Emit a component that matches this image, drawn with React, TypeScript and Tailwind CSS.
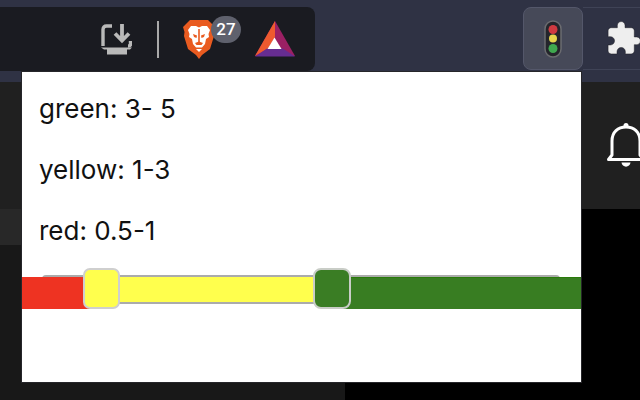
import React from "react";

function DownloadIcon() {
  return (
    <svg width="32" height="32" viewBox="0 0 32 32" fill="none" stroke="#b9b9b9" strokeWidth="3.400">
      <path d="M12 3H6.500Q3 3 3 6.500V23" />
      <path d="M22 1V17M15 10.500L22 17.500L29 10.500" strokeWidth="3.800" />
      <path d="M30.500 18V21.500Q30.500 23 28 23" />
      <path d="M1 24.500H32L30 26.500H27V31.500H7V26.500H4Z" fill="#b9b9b9" stroke="none" />
    </svg>
  );
}

function BraveLion() {
  return (
    <svg width="32" height="40" viewBox="0 0 32 40">
      <path d="M7 1H25L29 5L32 8L30.500 13L31 17L27 30L19 36L16 40L13 36L5 30L1 17L1.500 13L0 8L3 5Z" fill="#e95b20" />
      <path d="M8 7H13L16 8.500L19 7H24L27 11L25.500 15L26 18L23 20L22 25L19 28.500H13L10 25L9 20L6 18L6.500 15L5 11Z" fill="#fff" />
      <path d="M10 15L14 16.500L13.500 19L11 18ZM22 15L18 16.500L18.500 19L21 18ZM15.200 10V23H16.800V10Z" fill="#e95b20" />
      <path d="M12 24L16 22.500L20 24L18.500 26H13.500Z" fill="#e95b20" />
      <path d="M13 30H19L16 33Z" fill="#fff" />
    </svg>
  );
}

function BatLogo() {
  return (
    <svg width="40" height="36" viewBox="0 0 40 36">
      <path d="M20 0L0 35H40Z" fill="#9b2064" />
      <path d="M20 0L0 35L13 27.500L20 16Z" fill="#ee5a2f" />
      <path d="M0 35.500H40L28 27.500H12Z" fill="#662d91" />
      <path d="M19.500 16.500L12.500 28H26.500Z" fill="#fff" />
    </svg>
  );
}

function TrafficLight() {
  return (
    <svg width="18" height="38" viewBox="0 0 18 38">
      <rect x="1" y="1" width="16" height="36" rx="8" fill="#24252b" stroke="#6b6c70" strokeWidth="1.500" />
      <circle cx="9" cy="9.500" r="4.500" fill="#cf3a40" />
      <circle cx="9" cy="18.500" r="4" fill="#e6d64c" />
      <circle cx="9" cy="28.500" r="4.500" fill="#3fa94f" />
    </svg>
  );
}

function Puzzle() {
  return (
    <svg width="37" height="37" viewBox="0 0 24 24" fill="#eeeeee" stroke="#15161c" strokeWidth="0.300">
      <path d="M20.500 11H19V7c0-1.100-.9-2-2-2h-4V3.500C13 2.120 11.880 1 10.500 1S8 2.120 8 3.500V5H4c-1.100 0-1.990.9-1.990 2v3.800H3.500c1.490 0 2.700 1.210 2.700 2.700s-1.210 2.700-2.700 2.700H2V20c0 1.100.9 2 2 2h3.800v-1.500c0-1.490 1.210-2.700 2.700-2.700 1.490 0 2.700 1.210 2.700 2.700V22H17c1.100 0 2-.9 2-2v-4h1.500c1.380 0 2.500-1.120 2.500-2.500S21.880 11 20.500 11z" />
    </svg>
  );
}

function Bell() {
  return (
    <svg width="38" height="48" viewBox="0 0 38 48" fill="none" stroke="#fff" strokeWidth="3" className="shrink-0">
      <path d="M5 33V19C5 10 11 5 19 5C27 5 33 10 33 19V33L36.500 37.500H1.500Z" strokeLinejoin="round" />
      <circle cx="19" cy="3.500" r="2.500" fill="#fff" stroke="none" />
      <path d="M14.500 40.500C15 46 23 46 23.500 40.500Z" fill="#fff" stroke="none" />
    </svg>
  );
}

export default function App() {
  return (
    <div className="relative w-[640px] h-[400px] overflow-hidden bg-black flex flex-col">
      <div className="h-[82px] bg-[#2f3244] flex items-start shrink-0">
        <div className="mt-[7px] w-[315px] h-[64px] shrink-0 bg-[#1a1b21] rounded-r-[8px] flex items-center justify-end pr-[20px]">
          <DownloadIcon />
          <div className="ml-[25px] w-[2px] h-[37px] bg-[#a9a9a9]" />
          <div className="relative ml-[24px] w-[32px] h-[40px]">
            <BraveLion />
            <div className="absolute left-[28px] top-[-3px] w-[30px] h-[27px] rounded-full bg-[#5f616d] text-white text-[17px] font-medium leading-[27px] text-center font-['Roboto',sans-serif]">
              27
            </div>
          </div>
          <div className="ml-[40px]">
            <BatLogo />
          </div>
        </div>
        <div className="ml-[208px] mt-[7px] w-[60px] h-[63px] shrink-0 rounded-[8px] bg-[#464958] border border-[#54576a] flex items-center justify-center">
          <TrafficLight />
        </div>
        <div className="mt-[7px] h-[63px] flex-1 border-y border-[#3f4356] pl-[22px] pt-[12px]">
          <Puzzle />
        </div>
      </div>
      <div className="h-[127px] bg-[#202020] flex justify-end items-center shrink-0 pt-[1px]">
        <div className="mr-[-5px] flex">
          <Bell />
        </div>
      </div>
      <div className="flex-1 flex">
        <div className="w-[345px] bg-[#181818] flex flex-col">
          <div className="h-[36px] bg-[#282828]" />
        </div>
      </div>

      <div className="absolute left-[21px] top-[71px] w-[561px] h-[312px] bg-white border border-[#26262a] font-['Inter',sans-serif] text-[#111111]">
        <div className="pl-[17px] pt-[20px] text-[26px] leading-[34px] flex flex-col gap-[27px]">
          <p>green: 3- 5</p>
          <p>yellow: 1-3</p>
          <p>red: 0.5-1</p>
        </div>
        <div className="relative mt-[20px] h-[41px]">
          <div className="absolute left-[20px] w-[518px] top-[7px] h-[29px] rounded-[4px] bg-[#ababab]" />
          <div className="absolute inset-x-0 top-[9px] flex items-start">
            <div className="w-[70px] h-[32px] bg-[#ee3322]" />
            <div className="w-[240px] h-[25px] bg-[#ffff4d]" />
            <div className="flex-1 h-[32px] bg-[#387d22] border-t border-[#2a7a0a]" />
          </div>
          <div className="absolute left-[61px] top-0 w-[37px] h-[41px] rounded-[7px] bg-[#ffff4d] border-2 border-[#cfcfcf]" />
          <div className="absolute left-[291px] top-0 w-[38px] h-[41px] rounded-[8px] bg-[#3a7d24] border-2 border-[#c9cdc7]" />
        </div>
      </div>
    </div>
  );
}
